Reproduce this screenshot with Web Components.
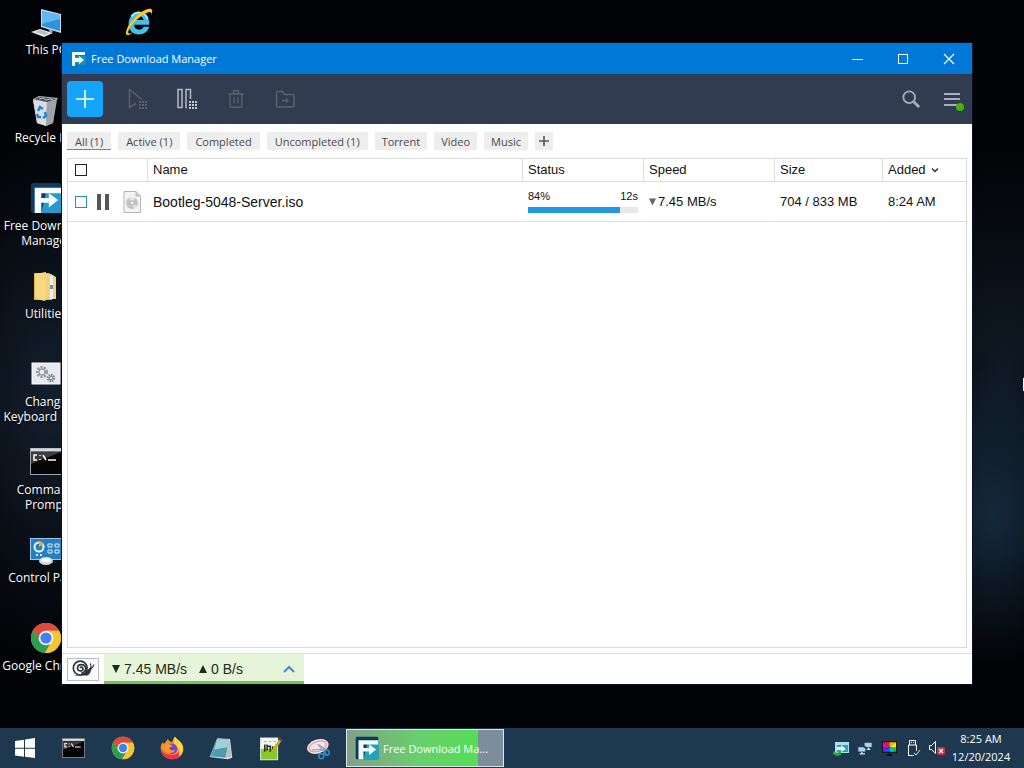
<!DOCTYPE html>
<html lang="en">
<head>
<meta charset="utf-8">
<meta name="viewport" content="width=device-width, initial-scale=1">
<title>Free Download Manager</title>
<style>
  body {
    margin: 0;
    background: #020306;
    font-family: "Open Sans", "Noto Sans", sans-serif;
  }
</style>
</head>
<body>
<win-desktop>
  <desktop-icon icon="pc">This PC</desktop-icon>
  <desktop-icon icon="bin">Recycle Bin</desktop-icon>
  <desktop-icon icon="fdm-large">Free Download<br>Manager</desktop-icon>
  <desktop-icon icon="folder">Utilities</desktop-icon>
  <desktop-icon icon="gears">Change<br>Keyboard Lay...</desktop-icon>
  <desktop-icon icon="cmd">Command<br>Prompt</desktop-icon>
  <desktop-icon icon="control">Control Panel</desktop-icon>
  <desktop-icon icon="chrome">Google Chrome</desktop-icon>
  <desktop-icon icon="ie"></desktop-icon>

  <app-window slot="window" heading="Free Download Manager">
    <tool-bar></tool-bar>
    <filter-tabs></filter-tabs>
    <download-list></download-list>
    <speed-bar></speed-bar>
  </app-window>

  <task-bar slot="taskbar"></task-bar>
</win-desktop>

<script>
const chrome = `
  <circle cx="16" cy="16" r="15" fill="#f4c430"/>
  <path d="M16 16 3 8.5A15 15 0 0 1 29 8.5H16z" fill="#dd4b3c"/>
  <path d="M3 8.5A15 15 0 0 0 15 31l6.500-11.500L9.500 19.500z" fill="#2e9d52"/>
  <path d="M16 8.500h13A15 15 0 0 1 15 31l7-12z" fill="#f6c532"/>
  <path d="M3 8.500 9.700 20 16 9z" fill="#2e9d52"/>
  <path d="M3 8.500A15 15 0 0 1 29 8.500H15L9.500 16z" fill="#dd4b3c"/>
  <circle cx="16" cy="16" r="7.300" fill="#f2f5fa"/>
  <circle cx="16" cy="16" r="5.600" fill="#4381ee"/>`;

const cmd = `
  <rect x=".5" y="2.500" width="31" height="26" fill="#050505" stroke="#9da3a8"/>
  <path d="M1 4h30" stroke="#d6dade" stroke-width="3"/>
  <path d="M1 6h30L1 18z" fill="#3d3d3d"/>
  <path d="M7 9H4v5h3M10 9v1m0 3v1m3-5 3 5m2 0h8" fill="none" stroke="#fff" stroke-width="1.500"/>`;

const dots = (x, y, c) => {
  let out = "";
  for (let r = 0; r < 3; r++) {
    for (let k = 0; k < 3; k++) {
      out += `<rect x="${x + k * 3}" y="${y + r * 3}" width="2" height="2" fill="${c}"/>`;
    }
  }
  return out;
};

// name: [viewBox, markup]
const ICONS = {
  pc: ["0 0 32 32", `
    <path d="m11 3 20 5v19l-20-6z" fill="#c7dced"/>
    <path d="m12 5 18 4v16l-18-5z" fill="#2d93dd"/>
    <path d="m12 5 18 4v4L12 18z" fill="#62b7f0"/>
    <path d="m1 26 9-3 13 4-9 4z" fill="#e3e7ea"/>
    <path d="m5 26 5-2 9 3-4 2z" fill="#b7c0c7"/>
    <path d="m18 23 5 2-2 3" fill="#aab6c0"/>`],
  bin: ["0 0 32 32", `
    <path d="m3 5 6-3 19 2-2 3-3 22-7 3-9-3z" fill="#b9bdc0"/>
    <path d="m3 6 14 2-1 24-9-3z" fill="#dadddf"/>
    <path d="m17 8 10-2-4 23-7 3z" fill="#9ea3a7"/>
    <path d="m4 5 6-2 17 2-10 3z" fill="#454b50"/>
    <path d="m9 5 4-1 3 2 4-1 3 1" stroke="#c8cccf" fill="none"/>
    <g fill="none" stroke="#2583c9" stroke-width="2.500"><path d="m8 17 2-4 3 2M7 20l1 3h3m4-5 1 4-3 2"/></g>`],
  "fdm-large": ["0 0 34 34", `<rect x="1" y="1" width="32" height="32" rx="3" fill="#0d3c60"/><path d="M17 11h17v22H12z" fill="#259bd0"/>
    <path d="M5 6h28v6H12v5h8v-5l10 7-10 8v-5h-8v11H5z" fill="#f7fcff"/>`],
  fdm: ["0 0 34 34", `<rect x="1" y="1" width="32" height="32" rx="2" fill="#0b3b59"/><path d="M17 11h17v22H12z" fill="#25a1b9"/>
    <path d="M5 6h28v6H12v5h8v-5l10 7-10 8v-5h-8v11H5z" fill="#f2fbfd"/>`],
  "fdm-small": ["0 0 16 16", `<rect x="4" y="5" width="11" height="9" fill="#1492a6"/><path d="M1 1h13v3H4v3h4V5l5 4-5 4v-2H4v4H1z" fill="#f0fbff"/>`],
  folder: ["0 0 32 32", `
    <path d="M4 3h15l3 2v25H4z" fill="#e0b850"/>
    <path d="m5 4 11-2v28l-2 1-9-3z" fill="#f4d980"/>
    <path d="M16 4h5l5 3v22H16z" fill="#f0d27c"/>
    <path d="M20 6h3v23h-3z" fill="#eff2f3"/><path d="M20 15h3v4h-3z" fill="#6e8faa"/>`],
  gears: ["0 0 32 32", `
    <rect x="2" y="5" width="28" height="21" fill="#e7ebee" stroke="#f9fafb"/>
    <circle cx="12" cy="14" r="4.500" fill="none" stroke="#8d969d" stroke-width="3" stroke-dasharray="2 1.200"/>
    <circle cx="12" cy="14" r="3" fill="none" stroke="#8d969d"/>
    <circle cx="21" cy="20" r="3" fill="none" stroke="#7a848b" stroke-width="2.500" stroke-dasharray="1.500 .8"/>
    <circle cx="21" cy="20" r="1.700" fill="none" stroke="#7a848b"/>`],
  cmd: ["0 0 32 32", cmd],
  control: ["0 0 32 32", `
    <rect x="0" y="4" width="32" height="22" fill="#9cc8e6"/><rect x="1" y="5" width="31" height="20" fill="#267fc4"/>
    <circle cx="9" cy="13" r="4.500" fill="none" stroke="#eef6fb" stroke-width="2"/><path d="M9 13V7a6 6 0 0 1 5 3z" fill="#f4a62a"/>
    <path d="M18 10h4v3h-4zm7 0h4v3h-4zm-7 6h4v3h-4zm7 0h4v3h-4z" fill="none" stroke="#d9eefb"/>
    <path d="M6 21h2m2 0h2" stroke="#d9eefb" stroke-width="2"/>
    <ellipse cx="16" cy="27" rx="7" ry="4" fill="#d5d9dc"/><ellipse cx="16" cy="26" rx="5" ry="2" fill="#f5f6f7"/>`],
  chrome: ["0 0 32 32", chrome],
  ie: ["0 0 32 34", `
    <path d="M27 20H12c0 6 8 7 10 2h6C25 34 5 33 6 18 7 3 29 3 28 20zm-15-5h10c-1-6-9-6-10 0z" fill="#43bfe9" fill-rule="evenodd"/>
    <path d="M9 11C15 4 25 7 26 14" fill="none" stroke="#a7e9fb" stroke-width="2"/>
    <path d="M5 31C-1 30 9 12 22 5c8-4 11-2 8 5 1-4-1-5-6-2C14 13 4 26 6 29c1 1 3 0 5-1-2 2-4 3-6 3z" fill="#f4ca24"/>`],
  minimize: ["0 0 12 12", `<path d="M1 6.500h11" stroke="#fff"/>`],
  maximize: ["0 0 12 12", `<rect x="1.500" y="1.500" width="9" height="9" fill="none" stroke="#fff"/>`],
  close: ["0 0 12 12", `<path d="m1 1 10 10M11 1 1 11" stroke="#fff" stroke-width="1.200"/>`],
  plus: ["0 0 20 20", `<path d="M10 1v18M1 10h18" stroke="#fff" stroke-width="1.600"/>`],
  play: ["0 0 24 24", `<path d="M10 16.500 3.500 20.500V2.500L16 12.500" fill="none" stroke="#59616e" stroke-width="1.500"/>${dots(13, 14, "#59616e")}`],
  pause: ["0 0 24 24", `<path d="M3 2.500h4v18H3zM12 20.500h-1v-18h4.500V12" fill="none" stroke="#b3bac6" stroke-width="1.500"/>${dots(14, 14, "#c1c8d3")}`],
  trash: ["0 0 24 24", `<path d="M5.500 6.500h13v13q0 1.500-1.500 1.500H7q-1.500 0-1.500-1.500zM3.500 6.500h17M9.500 6V3h5v3M10 10v7m4-7v7" fill="none" stroke="#59616e" stroke-width="1.500"/>`],
  move: ["0 0 24 24", `<path d="M3.500 5.500q0-1 1-1h5l2 3h8.500q1 0 1 1v10.500q0 1-1 1H4.500q-1 0-1-1zM9 13.500h6m-2-2 2 2-2 2" fill="none" stroke="#59616e" stroke-width="1.500"/>`],
  search: ["0 0 20 20", `<circle cx="8" cy="8" r="6.500" fill="none" stroke="#a6aebd" stroke-width="2"/><path d="m13 13 6 6" stroke="#a6aebd" stroke-width="3"/>`],
  menu: ["0 0 24 24", `<path d="M4 7h16M4 12h16M4 18h16" stroke="#a6aebd" stroke-width="2"/><circle cx="20" cy="20" r="4" fill="#43b40c"/>`],
  "plus-small": ["0 0 12 12", `<path d="M6 1v10M1 6h10" stroke="#555" stroke-width="1.600"/>`],
  paused: ["0 0 12 16", `<path d="M0 0h4v16H0zM8 0h4v16H8z" fill="#555"/>`],
  iso: ["0 0 18 22", `
    <path d="M1 .5h12l4.500 4.500v16.500H1z" fill="#f4f4f4" stroke="#b5b5b5"/><path d="M13 .5V5h4.500" fill="#ccc" stroke="#b5b5b5"/>
    <circle cx="9" cy="12" r="6" fill="#c5c5c5"/><path d="M9 12 6 6.800a6 6 0 0 1 6 0zm0 0 5 3.500a6 6 0 0 1-3 2z" fill="#e8e8e8"/><circle cx="9" cy="12" r="2.200" fill="#f4f4f4" stroke="#aaa"/>`],
  "caret-down": ["0 0 8 8", `<path d="M0 0h8L4 8z" fill="currentColor"/>`],
  "caret-up": ["0 0 8 8", `<path d="M0 8h8L4 0z" fill="currentColor"/>`],
  sort: ["0 0 8 8", `<path d="m1 2.500 3 3 3-3" fill="none" stroke="#333" stroke-width="1.500"/>`],
  "chevron-up": ["0 0 12 12", `<path d="m1 9 5-5 5 5" fill="none" stroke="#3a8fd0" stroke-width="2"/>`],
  snail: ["0 0 26 18", `
    <path d="M3 16h14c4 0 4-5 6-8l-2-1c-2 1-4 5-7 7z" fill="#2d343a"/>
    <path d="m22 8-1-5m2 5 2-4" stroke="#2d343a" stroke-width="1.200"/>
    <circle cx="10" cy="8" r="7.500" fill="#fff" stroke="#2d343a" stroke-width="1.800"/>
    <path d="M10 8c0-2 3-1 3 1 0 3-6 3-6-1 0-5 8-5 9 0 0 3-2 5-5 6" fill="none" stroke="#2d343a" stroke-width="1.800"/>`],
  windows: ["0 0 20 20", `<path d="m0 3 9-1.300v8H0zm10-1.500L20 0v9.700H10zM0 10.700h9v8L0 17.400zm10 0h10V20l-10-1.300z" fill="#fff"/>`],
  firefox: ["0 0 32 32", `
    <path d="M16 31C7 31 1 24 1 16c0-4 1-6 3-8l1 3c2-3 4-4 5-7 2 2 3 3 5 4 3 0 2-5 5-7 2 4 11 7 11 16 0 8-6 14-15 14z" fill="#ff8a24"/>
    <path d="M16 31C8 31 2 25 1 17c4 5 5 7 13 8 8 1 12-3 15-9 2 9-4 15-13 15z" fill="#ef2f59"/>
    <path d="M20 1c2 4 11 7 11 16 0 5-3 9-6 11 2-7 0-12-4-15-3-3-4-7-1-12z" fill="#ffd43c"/>
    <circle cx="16" cy="17" r="7" fill="#7547cf"/>
    <path d="M7 12c4-2 8-1 10 2-4 0-5 2-4 4 2 2 5 2 7 0-1 6-12 7-13-1z" fill="#ffa02e"/>`],
  notepad: ["0 0 32 32", `
    <path d="m11 3 17 1 3 25-6 2-24-3z" fill="#d7e4e8"/><path d="m11 4 16 1-5 24-20-2z" fill="#4d9bab"/>
    <path d="m11 4 16 1-2 10-18 3z" fill="#9fd0d8"/><path d="m27 5 3 23-8 1z" fill="#b6bfc5"/>`],
  notepadpp: ["0 0 32 32", `
    <rect x="4" y="2" width="23" height="29" fill="#f3f6f0"/><path d="M5 17c6-3 14 3 21-3v16H5z" fill="#87c92b"/>
    <path d="M9 7h3m3 0h3m3 0h3" stroke="#999"/><path d="M10 11v9m3-9v8m0-6h4v7m3-7v6" stroke="#27301f" stroke-width="2" fill="none"/>
    <path d="m29 3 3 2-10 15-4 2 1-4z" fill="#b9b022"/><path d="m28 2 4 3-1 2-4-3z" fill="#863c25"/>`],
  snip: ["0 0 36 32", `
    <ellipse cx="17" cy="13" rx="16" ry="10" transform="rotate(-18 17 13)" fill="#f4e5e8"/>
    <ellipse cx="17" cy="13" rx="13" ry="7" transform="rotate(-18 17 13)" fill="none" stroke="#ee9aa9" stroke-width="2"/>
    <path d="m8 18 20-1-11-7 13 16" stroke="#9aa9b6" stroke-width="2" fill="none"/>
    <circle cx="22" cy="27" r="3.500" fill="none" stroke="#2c86c3" stroke-width="2.500"/><circle cx="30" cy="22" r="3.500" fill="none" stroke="#2c86c3" stroke-width="2.500"/>`],
  "tray-fdm": ["0 0 18 16", `<path d="M3 2h14v11H3z" fill="#a9dfe8"/><path d="M5 5h11v7H5z" fill="#2f9fb4"/><path d="M5 7h4V5l5 4-5 3v-2H5z" fill="#eef9fb"/><path d="m1 11 4 2 4-2v4l-4 1-4-2z" fill="#27a83b"/>`],
  network: ["0 0 18 16", `<path d="M8 1h9v6H8zM1 6h9v6H1z" fill="#a8d4f2" stroke="#1c3246"/><path d="M11 9h4M3 14h6M5.500 12v2M13 7v2" stroke="#d6e8f4" stroke-width="1.500"/>`],
  display: ["0 0 18 16", `
    <rect x="1" y="1" width="16" height="12" fill="#111"/>
    <path d="M9 7 2 2h7z" fill="#e22"/><path d="M9 7V2h7z" fill="#fb0"/><path d="m9 7 7-5v5z" fill="#ee3"/><path d="M9 7h7v5z" fill="#2c3"/>
    <path d="m9 7 7 5H9z" fill="#0cc"/><path d="M9 7v5H2z" fill="#25f"/><path d="M9 7 2 12V7z" fill="#62e"/><path d="M9 7H2V2z" fill="#d1b"/>
    <path d="M9 13v2M6 15.500h6" stroke="#111" stroke-width="2"/>`],
  usb: ["0 0 16 18", `<path d="M4.500 6V1.500h6V6M9 16.500H3.500V6h8v6M6.500 3v1m2-1v1" fill="none" stroke="#fff"/><path d="m9 14 2 2 4-5" fill="none" stroke="#dce5ec"/>`],
  mute: ["0 0 18 16", `<path d="M1.500 5.500h2l4-4v12l-4-4h-2z" fill="none" stroke="#fff"/><rect x="9" y="7" width="8" height="8" rx="1" fill="#c92d42"/><path d="m11 9 4 4m0-4-4 4" stroke="#fff" stroke-width="1.300"/>`]
};

class UiIcon extends HTMLElement {
  constructor() {
    super();
    this.attachShadow({ mode: "open" });
  }
  static get observedAttributes() {
    return ["name", "w", "h"];
  }
  attributeChangedCallback() {
    this.render();
  }
  connectedCallback() {
    this.render();
  }
  render() {
    const icon = ICONS[this.getAttribute("name")];
    if (!icon) return;
    const w = this.getAttribute("w") || 16;
    const h = this.getAttribute("h") || w;
    this.shadowRoot.innerHTML = /*html*/ `
      <style>
        :host { display: inline-flex; flex: none; }
        svg { display: block; }
      </style>
      <svg width="${w}" height="${h}" viewBox="${icon[0]}" aria-hidden="true">${icon[1]}</svg>
    `;
  }
}
customElements.define("ui-icon", UiIcon);

class WinDesktop extends HTMLElement {
  constructor() {
    super();
    this.attachShadow({ mode: "open" });
    this.shadowRoot.innerHTML = /*html*/ `
      <style>${WinDesktop.styles}</style>
      <main>
        <div class="icons"><slot></slot></div>
        <slot name="window"></slot>
        <div class="pointer"></div>
      </main>
      <slot name="taskbar"></slot>
    `;
  }
  static get styles() {
    return /*css*/ `
      :host {
        display: flex;
        flex-direction: column;
        height: 100vh;
        overflow: hidden;
        background:
          radial-gradient(ellipse 90px 150px at 97% 67%, #15293c, transparent),
          radial-gradient(ellipse 130px 220px at 98% 48%, #0f1a25, transparent),
          radial-gradient(ellipse 130px 260px at 5% 52%, #14202e, transparent),
          #020306;
      }
      main {
        flex: 1;
        position: relative;
        min-height: 0;
      }
      .icons {
        display: grid;
        grid-auto-flow: column;
        grid-template-rows: repeat(8, 88px);
        grid-auto-columns: 92px;
        justify-content: start;
        padding-top: 6px;
      }
      .pointer {
        position: absolute;
        right: 0;
        top: 378px;
        width: 1px;
        height: 13px;
        background: #fff;
      }
    `;
  }
}
customElements.define("win-desktop", WinDesktop);

class DesktopIcon extends HTMLElement {
  constructor() {
    super();
    this.attachShadow({ mode: "open" });
  }
  connectedCallback() {
    this.shadowRoot.innerHTML = /*html*/ `
      <style>
        :host {
          display: flex;
          flex-direction: column;
          align-items: center;
          gap: 4px;
        }
        span {
          text-align: center;
          white-space: nowrap;
          font-size: 12px;
          line-height: 15px;
          color: #fff;
          text-shadow: 0 1px 2px #000;
        }
      </style>
      <ui-icon name="${this.getAttribute("icon")}" w="32"></ui-icon>
      <span><slot></slot></span>
    `;
  }
}
customElements.define("desktop-icon", DesktopIcon);

class AppWindow extends HTMLElement {
  constructor() {
    super();
    this.attachShadow({ mode: "open" });
  }
  connectedCallback() {
    this.shadowRoot.innerHTML = /*html*/ `
      <style>${AppWindow.styles}</style>
      <header>
        <ui-icon name="fdm-small" w="16"></ui-icon>
        <span>${this.getAttribute("heading")}</span>
        <button aria-label="Minimize"><ui-icon name="minimize" w="12"></ui-icon></button>
        <button aria-label="Maximize"><ui-icon name="maximize" w="12"></ui-icon></button>
        <button aria-label="Close"><ui-icon name="close" w="12"></ui-icon></button>
      </header>
      <slot></slot>
    `;
  }
  static get styles() {
    return /*css*/ `
      :host {
        position: absolute;
        inset: 43px 52px 44px 62px;
        display: flex;
        flex-direction: column;
        background: #fff;
        box-shadow: 0 0 0 1px #0a1420;
      }
      header {
        display: flex;
        align-items: center;
        height: 31px;
        padding-left: 9px;
        background: #0078d7;
        color: #fff;
        font-size: 11px;
      }
      span {
        flex: 1;
        margin-left: 4px;
      }
      button {
        display: flex;
        align-items: center;
        justify-content: center;
        width: 46px;
        height: 31px;
        padding: 0;
        border: 0;
        background: none;
      }
      button:hover { background: #1a86db; }
    `;
  }
}
customElements.define("app-window", AppWindow);

class ToolBar extends HTMLElement {
  constructor() {
    super();
    this.attachShadow({ mode: "open" });
    this.shadowRoot.innerHTML = /*html*/ `
      <style>${ToolBar.styles}</style>
      <button class="add" aria-label="Add download"><ui-icon name="plus" w="20"></ui-icon></button>
      <button disabled aria-label="Start all"><ui-icon name="play" w="24"></ui-icon></button>
      <button aria-label="Pause all"><ui-icon name="pause" w="24"></ui-icon></button>
      <button disabled aria-label="Delete"><ui-icon name="trash" w="22"></ui-icon></button>
      <button disabled aria-label="Move to"><ui-icon name="move" w="24"></ui-icon></button>
      <div class="right">
        <button aria-label="Search"><ui-icon name="search" w="18"></ui-icon></button>
        <button aria-label="Menu"><ui-icon name="menu" w="24"></ui-icon></button>
      </div>
    `;
  }
  static get styles() {
    return /*css*/ `
      :host {
        display: flex;
        align-items: center;
        gap: 13px;
        height: 50px;
        padding: 0 8px 0 5px;
        background: #323c50;
      }
      button {
        display: flex;
        align-items: center;
        justify-content: center;
        width: 36px;
        height: 36px;
        padding: 0;
        border: 0;
        border-radius: 4px;
        background: none;
      }
      .add {
        margin-right: 4px;
        background: #16a4fa;
      }
      .right {
        display: flex;
        gap: 17px;
        margin-left: auto;
      }
      .right button { width: 24px; }
    `;
  }
}
customElements.define("tool-bar", ToolBar);

class FilterTabs extends HTMLElement {
  constructor() {
    super();
    this.attachShadow({ mode: "open" });
    this.shadowRoot.innerHTML = /*html*/ `
      <style>${FilterTabs.styles}</style>
      <button class="selected">All (1)</button>
      <button>Active (1)</button>
      <button>Completed</button>
      <button>Uncompleted (1)</button>
      <button class="tag">Torrent</button>
      <button class="tag">Video</button>
      <button class="tag">Music</button>
      <button class="new" aria-label="Add tag"><ui-icon name="plus-small" w="12"></ui-icon></button>
    `;
  }
  static get styles() {
    return /*css*/ `
      :host {
        display: flex;
        gap: 7px;
        padding: 8px 5px;
      }
      button {
        display: flex;
        align-items: center;
        height: 18px;
        padding: 0 8px;
        border: 0;
        background: #eee;
        color: #4a4a4a;
        font: 11px "Open Sans", "Noto Sans", sans-serif;
      }
      .selected { box-shadow: inset 0 -1px #2a9ae0; }
      .tag { padding: 0 7px; }
      .new { padding: 0 3px; }
    `;
  }
}
customElements.define("filter-tabs", FilterTabs);

class DownloadList extends HTMLElement {
  constructor() {
    super();
    this.attachShadow({ mode: "open" });
    this.shadowRoot.innerHTML = /*html*/ `
      <style>${DownloadList.styles}</style>
      <table>
        <colgroup>
          <col class="c-pick"><col><col class="c-status"><col class="c-speed"><col class="c-size"><col class="c-added">
        </colgroup>
        <thead>
          <tr>
            <th><input type="checkbox" aria-label="Select all"></th>
            <th>Name</th>
            <th>Status</th>
            <th>Speed</th>
            <th>Size</th>
            <th>Added <ui-icon name="sort" w="8"></ui-icon></th>
          </tr>
        </thead>
        <tbody>
          <tr>
            <td>
              <div class="pick">
                <input type="checkbox" aria-label="Select Bootleg-5048-Server.iso">
                <button aria-label="Pause"><ui-icon name="paused" w="12" h="16"></ui-icon></button>
                <ui-icon name="iso" w="18" h="22"></ui-icon>
              </div>
            </td>
            <td class="name">Bootleg-5048-Server.iso</td>
            <td>
              <div class="progress"><span>84%</span><span>12s</span></div>
              <div class="track"><div></div></div>
            </td>
            <td><ui-icon class="down" name="caret-down" w="7" h="8"></ui-icon>7.45 MB/s</td>
            <td>704 / 833 MB</td>
            <td>8:24 AM</td>
          </tr>
        </tbody>
      </table>
    `;
  }
  static get styles() {
    return /*css*/ `
      :host {
        display: block;
        flex: 1;
        min-height: 0;
        margin: 0 5px 5px;
        border: 1px solid #d9d9d9;
        font-family: "Liberation Sans", Arial, sans-serif;
        color: #111;
      }
      table {
        width: 100%;
        table-layout: fixed;
        border-collapse: separate;
        border-spacing: 0;
        font-size: 13px;
      }
      .c-pick { width: 79px; }
      .c-status { width: 121px; }
      .c-speed { width: 131px; }
      .c-size { width: 108px; }
      .c-added { width: 84px; }
      th, td {
        box-sizing: border-box;
        padding: 0 5px;
        text-align: left;
        font-weight: normal;
        border-bottom: 1px solid #ddd;
        white-space: nowrap;
      }
      th {
        height: 23px;
        padding-bottom: 2px;
        border-left: 1px solid #ddd;
      }
      td {
        height: 40px;
        border-left: 1px solid transparent;
      }
      th:first-child, td:first-child {
        padding-left: 7px;
        padding-bottom: 0;
        border-left: 0;
      }
      input {
        appearance: none;
        display: block;
        width: 12px;
        height: 12px;
        margin: 0;
        border: 1px solid #222;
        background: #fff;
      }
      td input { border-color: #2a8fc0; }
      .pick {
        display: flex;
        align-items: center;
        gap: 10px;
      }
      button {
        display: flex;
        padding: 0;
        border: 0;
        background: none;
        margin-right: 4px;
      }
      .name { font-size: 14px; }
      .progress {
        display: flex;
        justify-content: space-between;
        font-size: 11px;
        line-height: 14px;
        padding-bottom: 4px;
      }
      .track {
        height: 6px;
        margin-bottom: 1px;
        background: #e8e8e8;
      }
      .track div {
        width: 84%;
        height: 100%;
        background: #2196e3;
      }
      .down {
        color: #666;
        margin-right: 2px;
      }
      th ui-icon { margin-left: 2px; }
    `;
  }
}
customElements.define("download-list", DownloadList);

class SpeedBar extends HTMLElement {
  constructor() {
    super();
    this.attachShadow({ mode: "open" });
    this.shadowRoot.innerHTML = /*html*/ `
      <style>${SpeedBar.styles}</style>
      <button class="snail" aria-label="Snail mode"><ui-icon name="snail" w="24" h="18"></ui-icon></button>
      <button class="speed">
        <ui-icon name="caret-down" w="8"></ui-icon><span class="rate">7.45 MB/s</span>
        <ui-icon name="caret-up" w="8"></ui-icon><span>0 B/s</span>
        <ui-icon class="more" name="chevron-up" w="12"></ui-icon>
      </button>
    `;
  }
  static get styles() {
    return /*css*/ `
      :host {
        display: flex;
        align-items: center;
        gap: 5px;
        height: 30px;
        padding-left: 5px;
        border-top: 1px solid #ddd;
      }
      button {
        box-sizing: border-box;
        display: flex;
        align-items: center;
        padding: 0;
        border: 0;
      }
      .snail {
        justify-content: center;
        width: 32px;
        height: 23px;
        border: 1px solid #b9bec4;
        background: #fbfbfb;
      }
      .speed {
        gap: 4px;
        width: 200px;
        height: 30px;
        padding: 2px 9px 0 8px;
        border-bottom: 3px solid #77c25b;
        background: #e6f5da;
        color: #1c2b1c;
        font: 14px "Liberation Sans", Arial, sans-serif;
      }
      .rate { margin-right: 8px; }
      .more { margin-left: auto; }
    `;
  }
}
customElements.define("speed-bar", SpeedBar);

class TaskBar extends HTMLElement {
  constructor() {
    super();
    this.attachShadow({ mode: "open" });
    this.shadowRoot.innerHTML = /*html*/ `
      <style>${TaskBar.styles}</style>
      <button aria-label="Start"><ui-icon name="windows" w="20"></ui-icon></button>
      <button aria-label="Command Prompt"><ui-icon name="cmd" w="23"></ui-icon></button>
      <button aria-label="Google Chrome"><ui-icon name="chrome" w="24"></ui-icon></button>
      <button aria-label="Firefox"><ui-icon name="firefox" w="24"></ui-icon></button>
      <button aria-label="Notepad"><ui-icon name="notepad" w="24"></ui-icon></button>
      <button aria-label="Notepad++"><ui-icon name="notepadpp" w="25"></ui-icon></button>
      <button aria-label="Snipping Tool"><ui-icon name="snip" w="25"></ui-icon></button>
      <button class="active"><ui-icon name="fdm" w="24"></ui-icon>Free Download Ma...</button>
      <div class="tray">
        <ui-icon name="tray-fdm" w="18" h="16"></ui-icon>
        <ui-icon name="network" w="16" h="15"></ui-icon>
        <ui-icon name="display" w="17" h="16"></ui-icon>
        <ui-icon name="usb" w="16" h="18"></ui-icon>
        <ui-icon name="mute" w="18" h="16"></ui-icon>
      </div>
      <div class="clock"><div>8:25 AM</div><div>12/20/2024</div></div>
    `;
  }
  static get styles() {
    return /*css*/ `
      :host {
        position: relative;
        display: flex;
        align-items: center;
        height: 40px;
        background: #1e394f;
        color: #fff;
      }
      button {
        display: flex;
        align-items: center;
        justify-content: center;
        width: 49px;
        height: 40px;
        padding: 0;
        border: 0;
        background: none;
      }
      .active {
        box-sizing: border-box;
        justify-content: start;
        gap: 4px;
        width: 158px;
        height: 38px;
        margin-left: 3px;
        padding-left: 8px;
        border: 1px solid #dfe6ea;
        background: linear-gradient(90deg, #82a089, #69ce6c 45%, #55dd55 84%, #7c8e9b 84%);
        color: #fff;
        font: 11px "Open Sans", "Noto Sans", sans-serif;
      }
      .tray {
        display: grid;
        grid-template-columns: repeat(5, 24px);
        justify-items: center;
        align-items: center;
        margin-left: auto;
      }
      .clock {
        width: 64px;
        margin-right: 11px;
        text-align: center;
        font-size: 11px;
        line-height: 18px;
      }
    `;
  }
}
customElements.define("task-bar", TaskBar);
</script>
</body>
</html>
